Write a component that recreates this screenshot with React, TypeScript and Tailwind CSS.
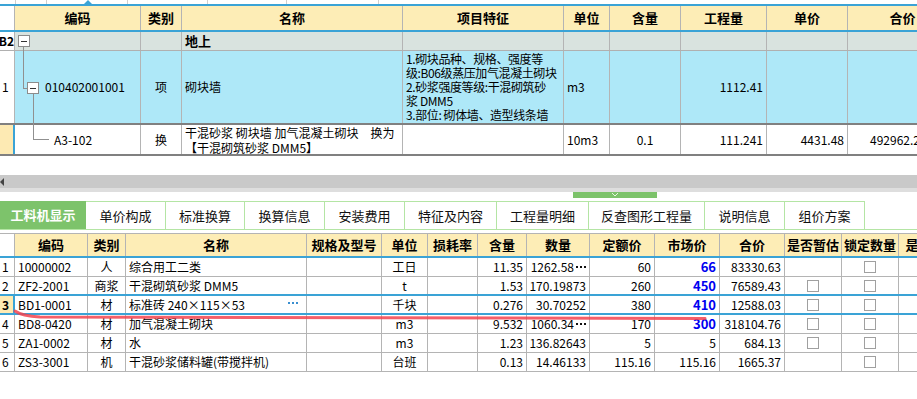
import React from 'react';

const FONT = { fontFamily: '"Noto Sans CJK SC", "Liberation Sans", sans-serif' };
const DOTS = { fontFamily: '"Liberation Sans", sans-serif' };

type Align = 'l' | 'c' | 'r';

const alignCls = (a: Align) =>
  a === 'l' ? 'justify-start pl-[3px]' : a === 'c' ? 'justify-center' : 'justify-end pr-[3px]';

// top grid column widths
const topCols = [15, 126, 41, 221, 161, 46, 71, 86, 81, 110];
const topHead = ['', '编码', '类别', '名称', '项目特征', '单位', '含量', '工程量', '单价', '合价'];

// lower grid column widths
const lowCols = [15, 73, 38, 181, 75, 46, 50, 49, 63, 65, 65, 65, 57, 57, 40];
const lowHead = ['', '编码', '类别', '名称', '规格及型号', '单位', '损耗率', '含量', '数量', '定额价', '市场价', '合价', '是否暂估', '锁定数量', '是否'];

const Box = () => (
  <div className="w-[12px] h-[12px] border border-[#8c8c8c] bg-white flex items-center justify-center">
    <div className="w-[6px] h-px bg-[#333]" />
  </div>
);

const Check = () => <div className="w-[12px] h-[12px] border border-[#a0a0a0] bg-white" />;

const Dots = ({ color }: { color: string }) => (
  <span className="flex items-center gap-[2px] pl-[2px]">
    {[0, 1, 2].map((i) => (
      <span key={i} className="w-[2px] h-[2px]" style={{ background: color }} />
    ))}
  </span>
);

const Cut = ({ v }: { v: string }) => (
  <span className="flex items-center">
    {v}
    <Dots color="#111" />
  </span>
);

type LowRow = {
  n: string;
  code: string;
  kind: string;
  name: string;
  unit: string;
  qty: string;
  num: React.ReactNode;
  price: string;
  market: string;
  blue: boolean;
  total: string;
  est: boolean;
  dots?: boolean;
};

const lowRows: LowRow[] = [
  { n: '1', code: '10000002', kind: '人', name: '综合用工二类', unit: '工日', qty: '11.35', num: <Cut v="1262.58" />, price: '60', market: '66', blue: true, total: '83330.63', est: false },
  { n: '2', code: 'ZF2-2001', kind: '商浆', name: '干混砌筑砂浆 DMM5', unit: 't', qty: '1.53', num: '170.19873', price: '260', market: '450', blue: true, total: '76589.43', est: true },
  { n: '3', code: 'BD1-0001', kind: '材', name: '标准砖 240×115×53', unit: '千块', qty: '0.276', num: '30.70252', price: '380', market: '410', blue: true, total: '12588.03', est: true, dots: true },
  { n: '4', code: 'BD8-0420', kind: '材', name: '加气混凝土砌块', unit: 'm3', qty: '9.532', num: <Cut v="1060.34" />, price: '170', market: '300', blue: true, total: '318104.76', est: true },
  { n: '5', code: 'ZA1-0002', kind: '材', name: '水', unit: 'm3', qty: '1.23', num: '136.82643', price: '5', market: '5', blue: false, total: '684.13', est: true },
  { n: '6', code: 'ZS3-3001', kind: '机', name: '干混砂浆储料罐(带搅拌机)', unit: '台班', qty: '0.13', num: '14.46133', price: '115.16', market: '115.16', blue: false, total: '1665.37', est: false },
];

const tabs = ['工料机显示', '单价构成', '标准换算', '换算信息', '安装费用', '特征及内容', '工程量明细', '反查图形工程量', '说明信息', '组价方案'];
const tabW = [86, 80, 79, 80, 80, 92, 92, 116, 80, 80];

export default function App() {
  return (
    <div className="relative w-[917px] h-[399px] overflow-hidden bg-white text-[12px] text-black" style={FONT}>
      {/* ruler strip */}
      <div className="relative h-[4px] flex">
        {[16, 31, 81, 80, 79, 92].map((w, i) => (
          <div key={i} className="h-full border-r border-[#cfcfcf]" style={{ width: w }} />
        ))}
        <div className="absolute left-[84px] top-0 w-0 h-0 border-l-[4px] border-r-[4px] border-b-[4px] border-l-transparent border-r-transparent border-b-[#3aa3d6]" />
      </div>

      {/* upper grid */}
      <div className="w-[960px] border-t-2 border-[#3aa3d6]">
        <div className="flex h-[26px] border-b-2 border-[#3aa3d6]">
          {topCols.map((w, i) => (
            <div
              key={i}
              style={{ width: w }}
              className={`shrink-0 flex items-center justify-center border-r border-[#b4b4b4] text-[13px] font-bold ${i === 0 ? 'bg-white' : 'bg-[#fdedb6]'}`}
            >
              {topHead[i]}
            </div>
          ))}
        </div>

        {/* 地上 */}
        <div className="flex h-[19px] border-b border-[#b0b0b0]">
          <div className="w-[15px] shrink-0 flex items-center justify-end overflow-hidden border-r border-[#b4b4b4] font-bold bg-white">
            <span className="shrink-0">B2</span>
          </div>
          <div className="w-[126px] shrink-0 relative border-r border-[#b4b4b4] bg-[#d9e3df]">
            <div className="absolute left-[3px] top-[3px]"><Box /></div>
            <div className="absolute left-[8px] top-[15px] w-px h-[40px] bg-[#909090]" />
          </div>
          <div className="w-[41px] shrink-0 border-r border-[#b4b4b4] bg-[#d9e3df]" />
          <div className="w-[221px] shrink-0 flex items-center pl-[3px] border-r border-[#b4b4b4] bg-[#d9e3df] font-bold text-[13px]">地上</div>
          {[161, 46, 71, 86, 81, 110].map((w, i) => (
            <div key={i} style={{ width: w }} className="shrink-0 border-r border-[#b4b4b4] bg-[#d9e3df]" />
          ))}
        </div>

        {/* 砌块墙 */}
        <div className="flex h-[74px] border-b-2 border-[#808080]">
          <div className="w-[15px] shrink-0 flex items-center pl-[2px] border-r border-[#b4b4b4] bg-white">1</div>
          <div className="w-[126px] shrink-0 relative flex items-center border-r border-[#b4b4b4] bg-[#aee8f8]">
            <div className="absolute left-[8px] top-0 w-px h-[38px] bg-[#909090]" />
            <div className="absolute left-[8px] top-[37px] w-[5px] h-px bg-[#909090]" />
            <div className="absolute left-[12px] top-[31px]"><Box /></div>
            <div className="absolute left-[18px] top-[43px] w-px h-[31px] bg-[#909090]" />
            <span className="pl-[30px]">010402001001</span>
          </div>
          <div className="w-[41px] shrink-0 flex items-center justify-center border-r border-[#b4b4b4] bg-[#aee8f8]">项</div>
          <div className="w-[221px] shrink-0 flex items-center pl-[3px] border-r border-[#b4b4b4] bg-[#aee8f8]">砌块墙</div>
          <div className="w-[161px] shrink-0 flex flex-col justify-center pl-[3px] border-r border-[#b4b4b4] bg-[#aee8f8] text-[12px] leading-[14px] tracking-[-0.4px] whitespace-nowrap overflow-hidden">
            <span>1.砌块品种、规格、强度等</span>
            <span>级:B06级蒸压加气混凝土砌块</span>
            <span>2.砂浆强度等级:干混砌筑砂</span>
            <span>浆 DMM5</span>
            <span>3.部位: 砌体墙、造型线条墙</span>
          </div>
          <div className="w-[46px] shrink-0 flex items-center pl-[3px] border-r border-[#b4b4b4] bg-[#aee8f8]">m3</div>
          <div className="w-[71px] shrink-0 border-r border-[#b4b4b4] bg-[#aee8f8]" />
          <div className="w-[86px] shrink-0 flex items-center justify-end pr-[3px] border-r border-[#b4b4b4] bg-[#aee8f8]">1112.41</div>
          <div className="w-[81px] shrink-0 border-r border-[#b4b4b4] bg-[#aee8f8]" />
          <div className="w-[110px] shrink-0 border-r border-[#b4b4b4] bg-[#aee8f8]" />
        </div>

        {/* A3-102 */}
        <div className="flex h-[31px] border-b-2 border-[#808080]">
          <div className="w-[15px] shrink-0 border-r-2 border-[#3aa3d6] bg-[#fdeab3]" />
          <div className="w-[126px] shrink-0 relative flex items-center border-r border-[#b4b4b4]">
            <div className="absolute left-[18px] top-0 w-px h-[14px] bg-[#909090]" />
            <div className="absolute left-[18px] top-[14px] w-[16px] h-px bg-[#909090]" />
            <span className="pl-[39px]">A3-102</span>
          </div>
          <div className="w-[41px] shrink-0 flex items-center justify-center border-r border-[#b4b4b4]">换</div>
          <div className="w-[221px] shrink-0 flex flex-col justify-center pl-[3px] border-r border-[#b4b4b4] leading-[15px] whitespace-nowrap overflow-hidden">
            <span>干混砂浆 砌块墙 加气混凝土砌块　换为</span>
            <span>【干混砌筑砂浆 DMM5】</span>
          </div>
          <div className="w-[161px] shrink-0 border-r border-[#b4b4b4]" />
          <div className="w-[46px] shrink-0 flex items-center pl-[3px] border-r border-[#b4b4b4]">10m3</div>
          <div className="w-[71px] shrink-0 flex items-center justify-center border-r border-[#b4b4b4]">0.1</div>
          <div className="w-[86px] shrink-0 flex items-center justify-end pr-[3px] border-r border-[#b4b4b4]">111.241</div>
          <div className="w-[81px] shrink-0 flex items-center justify-end pr-[3px] border-r border-[#b4b4b4]">4431.48</div>
          <div className="w-[110px] shrink-0 flex items-center pl-[22px] border-r border-[#b4b4b4]">492962.2</div>
        </div>
      </div>

      {/* scrollbar + splitter */}
      <div className="h-[19px]" />
      <div className="relative h-[13px] bg-[#c9c9c9]">
        <div className="absolute left-0 top-[3px] w-0 h-0 border-t-[4px] border-b-[4px] border-r-[4px] border-t-transparent border-b-transparent border-r-[#444]" />
      </div>
      <div className="h-[4px] bg-[#dedede]" />
      <div className="relative h-[9px]">
        <div className="absolute left-[573px] top-0 w-[84px] h-[6px] bg-[#7dc36b] flex justify-center">
          <svg width="8" height="6" viewBox="0 0 8 6"><path d="M1 1 L4 4 L7 1" stroke="#e6f5e0" strokeWidth="1" fill="none" /></svg>
        </div>
      </div>

      {/* tabs */}
      <div className="flex h-[29px] border-b border-[#b4e5a4]">
        {tabs.map((t, i) => (
          <div
            key={t}
            style={{ width: tabW[i] }}
            className={`shrink-0 flex items-center justify-center text-[13px] ${
              i === 0 ? 'bg-[#7dc36b] text-white font-bold' : 'border-t border-r border-[#b4e5a4] text-[#111]'
            }`}
          >
            {t}
          </div>
        ))}
      </div>
      <div className="h-[3px]" />

      {/* lower grid */}
      <div className="relative w-[960px] border-t border-[#b4b4b4]">
        <div className="flex h-[24px] border-b-2 border-[#3aa3d6]">
          {lowCols.map((w, i) => (
            <div
              key={i}
              style={{ width: w }}
              className={`shrink-0 flex items-center justify-center overflow-hidden whitespace-nowrap border-r border-[#b4b4b4] text-[13px] font-bold ${i === 0 ? 'bg-white' : 'bg-[#fdedb6]'}`}
            >
              {lowHead[i]}
            </div>
          ))}
        </div>

        {lowRows.map((r, idx) => {
          const sel = r.n === '3';
          const cells: [React.ReactNode, Align][] = [
            [r.code, 'l'],
            [r.kind, 'c'],
            [r.name, 'l'],
            ['', 'l'],
            [r.unit, 'c'],
            ['', 'r'],
            [r.qty, 'r'],
            [r.num, 'r'],
            [r.price, 'r'],
            [<span className={r.blue ? 'text-[#0000f0] font-bold text-[13px]' : ''}>{r.market}</span>, 'r'],
            [r.total, 'r'],
            [r.est ? <Check /> : '', 'c'],
            [<Check />, 'c'],
            ['', 'l'],
          ];
          return (
            <div
              key={r.n}
              className={`flex h-[19px] ${
                sel || idx === 1 ? 'border-b-2 border-[#3aa3d6]' : 'border-b border-[#b4b4b4]'
              }`}
            >
              <div
                className={`w-[15px] shrink-0 flex items-center pl-[2px] ${
                  sel ? 'bg-[#fdeab3] font-bold border-r-2 border-[#3aa3d6]' : 'bg-white border-r border-[#b4b4b4]'
                }`}
              >
                {r.n}
              </div>
              {cells.map(([c, a], i) => (
                <div
                  key={i}
                  style={{ width: lowCols[i + 1] }}
                  className={`relative shrink-0 flex items-center whitespace-nowrap overflow-hidden border-r border-[#b4b4b4] ${alignCls(a)}`}
                >
                  {c}
                  {i === 2 && r.dots && (
                    <span className="absolute right-[8px] top-[6px]">
                      <Dots color="#3a8fd0" />
                    </span>
                  )}
                </div>
              ))}
            </div>
          );
        })}

        {/* red hand-drawn mark */}
        <svg className="absolute left-0 top-0 pointer-events-none" width="917" height="120">
          <path d="M15 77 Q 22 82 40 83 L 705 84.5" stroke="#f2434f" strokeWidth="3" strokeOpacity="0.85" fill="none" strokeLinecap="round" />
        </svg>
      </div>
    </div>
  );
}
